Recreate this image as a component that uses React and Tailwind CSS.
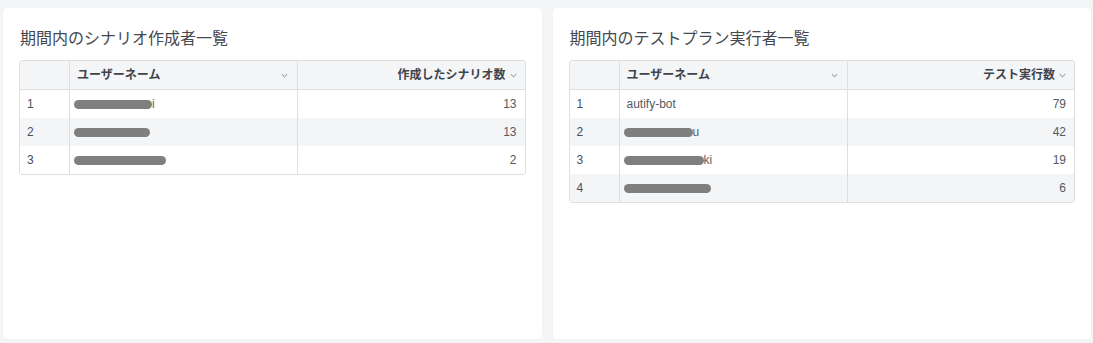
import React from "react";

const font = { fontFamily: '"Liberation Sans", "Noto Sans CJK JP", sans-serif' };

function Chevron() {
  return (
    <svg width="9" height="9" viewBox="0 0 9 9" className="shrink-0">
      <path d="M1.8 3.2 L4.5 5.8 L7.2 3.2" fill="none" stroke="#7d838c" strokeWidth="1" />
    </svg>
  );
}

function Masked({ w, tail }) {
  return (
    <span className="flex items-center">
      <span className="h-[9px] rounded-full bg-[#7f7f7f]" style={{ width: w }} />
      {tail && <span className="text-[#5a5f6b]">{tail}</span>}
    </span>
  );
}

function RankTable({ countLabel, rows }) {
  return (
    <div className="mx-4 mt-[10px] rounded-[3px] border border-[#dcdfe4] overflow-hidden text-[12px] text-[#555a63]">
      <div className="grid grid-cols-[50px_228px_1fr] h-[29px] bg-[#f4f5f7] border-b border-[#dcdfe4] font-bold text-[#3f434a]">
        <div className="border-r border-[#dcdfe4]" />
        <div className="flex items-center justify-between pl-[7px] pr-[8px] border-r border-[#dcdfe4]">
          <span>ユーザーネーム</span>
          <Chevron />
        </div>
        <div className="flex items-center justify-end gap-[3px] pr-[7px]">
          <span>{countLabel}</span>
          <Chevron />
        </div>
      </div>
      {rows.map((r, i) => (
        <div
          key={i}
          className={"grid grid-cols-[50px_228px_1fr] h-[28px] " + (i % 2 === 1 ? "bg-[#f4f5f7]" : "bg-white")}
        >
          <div className="flex items-center pl-[7px] border-r border-[#dcdfe4] text-[#4b4f5c]">{i + 1}</div>
          <div className="flex items-center pl-[4px] border-r border-[#dcdfe4]">
            {r.name ? <span className="pl-[3px]">{r.name}</span> : <Masked w={r.w} tail={r.tail} />}
          </div>
          <div className="flex items-center justify-end pr-[8px]">{r.count}</div>
        </div>
      ))}
    </div>
  );
}

function Card({ title, countLabel, rows }) {
  return (
    <div className="flex-1 bg-white rounded-[4px] shadow-[0_0_2px_rgba(0,0,0,0.06)] pt-[20px]">
      <h2 className="px-[17px] text-[16px] leading-[22px] text-[#44484f]">{title}</h2>
      <RankTable countLabel={countLabel} rows={rows} />
    </div>
  );
}

export default function App() {
  const left = [
    { w: 78, tail: "i", count: 13 },
    { w: 76, count: 13 },
    { w: 92, count: 2 },
  ];
  const right = [
    { name: "autify-bot", count: 79 },
    { w: 69, tail: "u", count: 42 },
    { w: 80, tail: "ki", count: 19 },
    { w: 87, count: 6 },
  ];
  return (
    <div style={font} className="w-[1093px] h-[343px] bg-[#f4f5f7] flex gap-[11px] pl-[3px] pr-[2px] pt-[8px] pb-[4px]">
      <Card title="期間内のシナリオ作成者一覧" countLabel="作成したシナリオ数" rows={left} />
      <Card title="期間内のテストプラン実行者一覧" countLabel="テスト実行数" rows={right} />
    </div>
  );
}
